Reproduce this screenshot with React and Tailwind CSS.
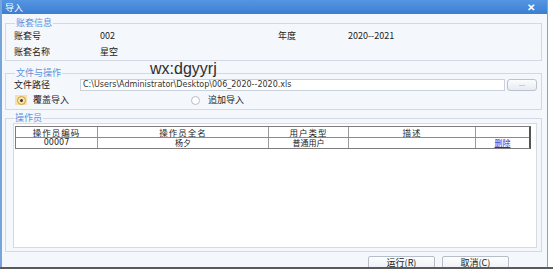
import React from 'react';

const cjk = { fontFamily: '"Noto Sans CJK SC", "Liberation Sans", sans-serif' };

const Legend = ({ children }) => (
  <legend className="ml-[1px] px-[1px] text-[9px] leading-[10px] text-[#5b93de]">{children}</legend>
);

const columns = [
  { label: '操作员编码', w: 'w-[82px]' },
  { label: '操作员全名', w: 'w-[171px]' },
  { label: '用户类型', w: 'w-[80px]' },
  { label: '描述', w: 'w-[127px]' },
  { label: '', w: 'w-[56px]' },
];

export default function App() {
  return (
    <div className="w-[553px] h-[269px] bg-white overflow-hidden flex flex-col" style={cjk}>
      <div className="relative w-[548px] h-[267px] overflow-hidden border-l-2 border-r border-[#78a4dc] bg-[#f4f7fb] flex flex-col">
        {/* title bar */}
        <div className="h-[14px] shrink-0 bg-gradient-to-b from-[#5596e2] to-[#3b7ed2] flex items-center justify-between pl-[3px] pr-[12px]">
          <span className="text-[9px] leading-none text-white">导入</span>
          <span className="text-[10px] leading-none font-bold text-white">✕</span>
        </div>

        {/* watermark */}
        <div className="absolute left-[148px] top-[60px] text-[16px] leading-[18px] text-[#2e2e2e]" style={{ fontFamily: '"Liberation Sans", Arial, sans-serif' }}>
          wx:dgyyrj
        </div>

        {/* 账套信息 */}
        <fieldset className="mt-[4px] ml-[3px] mr-[5px] border border-[#d3d9e2] pl-[8px] pr-[4px]">
          <Legend>账套信息</Legend>
          <div className="grid grid-cols-[86px_178px_70px_1fr] text-[9px] text-[#222]">
            <div className="h-[15px] flex items-center">账套号</div>
            <div className="h-[15px] flex items-center">002</div>
            <div className="h-[15px] flex items-center">年度</div>
            <div className="h-[15px] flex items-center">2020--2021</div>
            <div className="h-[17px] flex items-center">账套名称</div>
            <div className="h-[17px] flex items-center">星空</div>
          </div>
        </fieldset>

        {/* 文件与操作 */}
        <fieldset className="mt-[7px] ml-[3px] mr-[5px] border border-[#d3d9e2] pl-[8px] pr-[4px]">
          <Legend>文件与操作</Legend>
          <div className="h-[13px] flex items-center text-[9px] text-[#222]">
            <span className="w-[66px]">文件路径</span>
            <div className="h-[12px] w-[425px] bg-white border border-[#c9d1dc] flex items-center pl-[2px] text-[8px] text-[#333]" style={{ fontFamily: '"DejaVu Sans", Verdana, sans-serif' }}>
              C:\Users\Administrator\Desktop\006_2020--2020.xls
            </div>
            <div className="ml-[2px] h-[12px] w-[30px] rounded-[3px] border border-[#b9c2cd] bg-gradient-to-b from-[#fbfcfd] to-[#e7ebf0] flex items-center justify-center text-[7px] leading-none text-[#8a8f96] pb-[2px]">
              ...
            </div>
          </div>
          <div className="h-[18px] flex items-center text-[9px] text-[#222]">
            <span className="ml-[1px] w-[12px] h-[10px] bg-[#f7dfa8] flex items-center justify-center">
              <span className="w-[9px] h-[9px] rounded-full border border-[#c9a24e] bg-[#fbe2a5] flex items-center justify-center">
                <span className="w-[3px] h-[3px] rounded-full bg-[#3a3a3a]" />
              </span>
            </span>
            <span className="ml-[6px] w-[158px]">覆盖导入</span>
            <span className="w-[9px] h-[9px] rounded-full border border-[#b8bec6] bg-white" />
            <span className="ml-[8px]">追加导入</span>
          </div>
        </fieldset>

        {/* 操作员 */}
        <fieldset className="mt-[3px] ml-[3px] mr-[5px] border border-[#d3d9e2] pl-[7px] pr-[4px] pb-[3px]">
          <Legend>操作员</Legend>
          <div className="h-[125px] bg-white border border-[#d6dbe2] pl-[1px] pt-[2px]">
            <div className="w-[516px] border-t border-l border-b border-[#7d7d7d] border-r-2 border-r-[#555]">
              <div className="flex h-[11px] border-b border-[#8a8a8a]">
                {columns.map((c, i) => (
                  <div key={i} className={`${c.w} ${i < 4 ? 'border-r border-[#9a9a9a]' : 'flex-1'} flex items-center justify-center text-[8.5px] leading-none tracking-[1px] text-[#222]`}>
                    {c.label}
                  </div>
                ))}
              </div>
              <div className="flex h-[10px] text-[8px] leading-none text-[#222]">
                <div className="w-[82px] border-r border-[#9a9a9a] flex items-center justify-center" style={{ fontFamily: '"DejaVu Sans", sans-serif' }}>00007</div>
                <div className="w-[171px] border-r border-[#9a9a9a] flex items-center justify-center">杨夕</div>
                <div className="w-[80px] border-r border-[#9a9a9a] flex items-center justify-center">普通用户</div>
                <div className="w-[127px] border-r border-[#9a9a9a]" />
                <div className="flex-1 flex items-center justify-center">
                  <span className="text-[8px] text-[#1a33d8] underline">删除</span>
                </div>
              </div>
            </div>
          </div>
        </fieldset>

        {/* buttons */}
        <div className="mt-[4px] flex justify-end gap-[7px] pr-[38px]">
          {['运行(R)', '取消(C)'].map((t) => (
            <div key={t} className="w-[67px] h-[16px] rounded-[2px] border border-[#b7bec8] bg-gradient-to-b from-[#fdfdfe] to-[#e9edf2] flex items-start justify-center pt-[1px] text-[9px] leading-[10px] text-[#222]">
              {t}
            </div>
          ))}
        </div>
      </div>
      <div className="h-[2px] w-full bg-[#5a5a5a]" />
    </div>
  );
}
